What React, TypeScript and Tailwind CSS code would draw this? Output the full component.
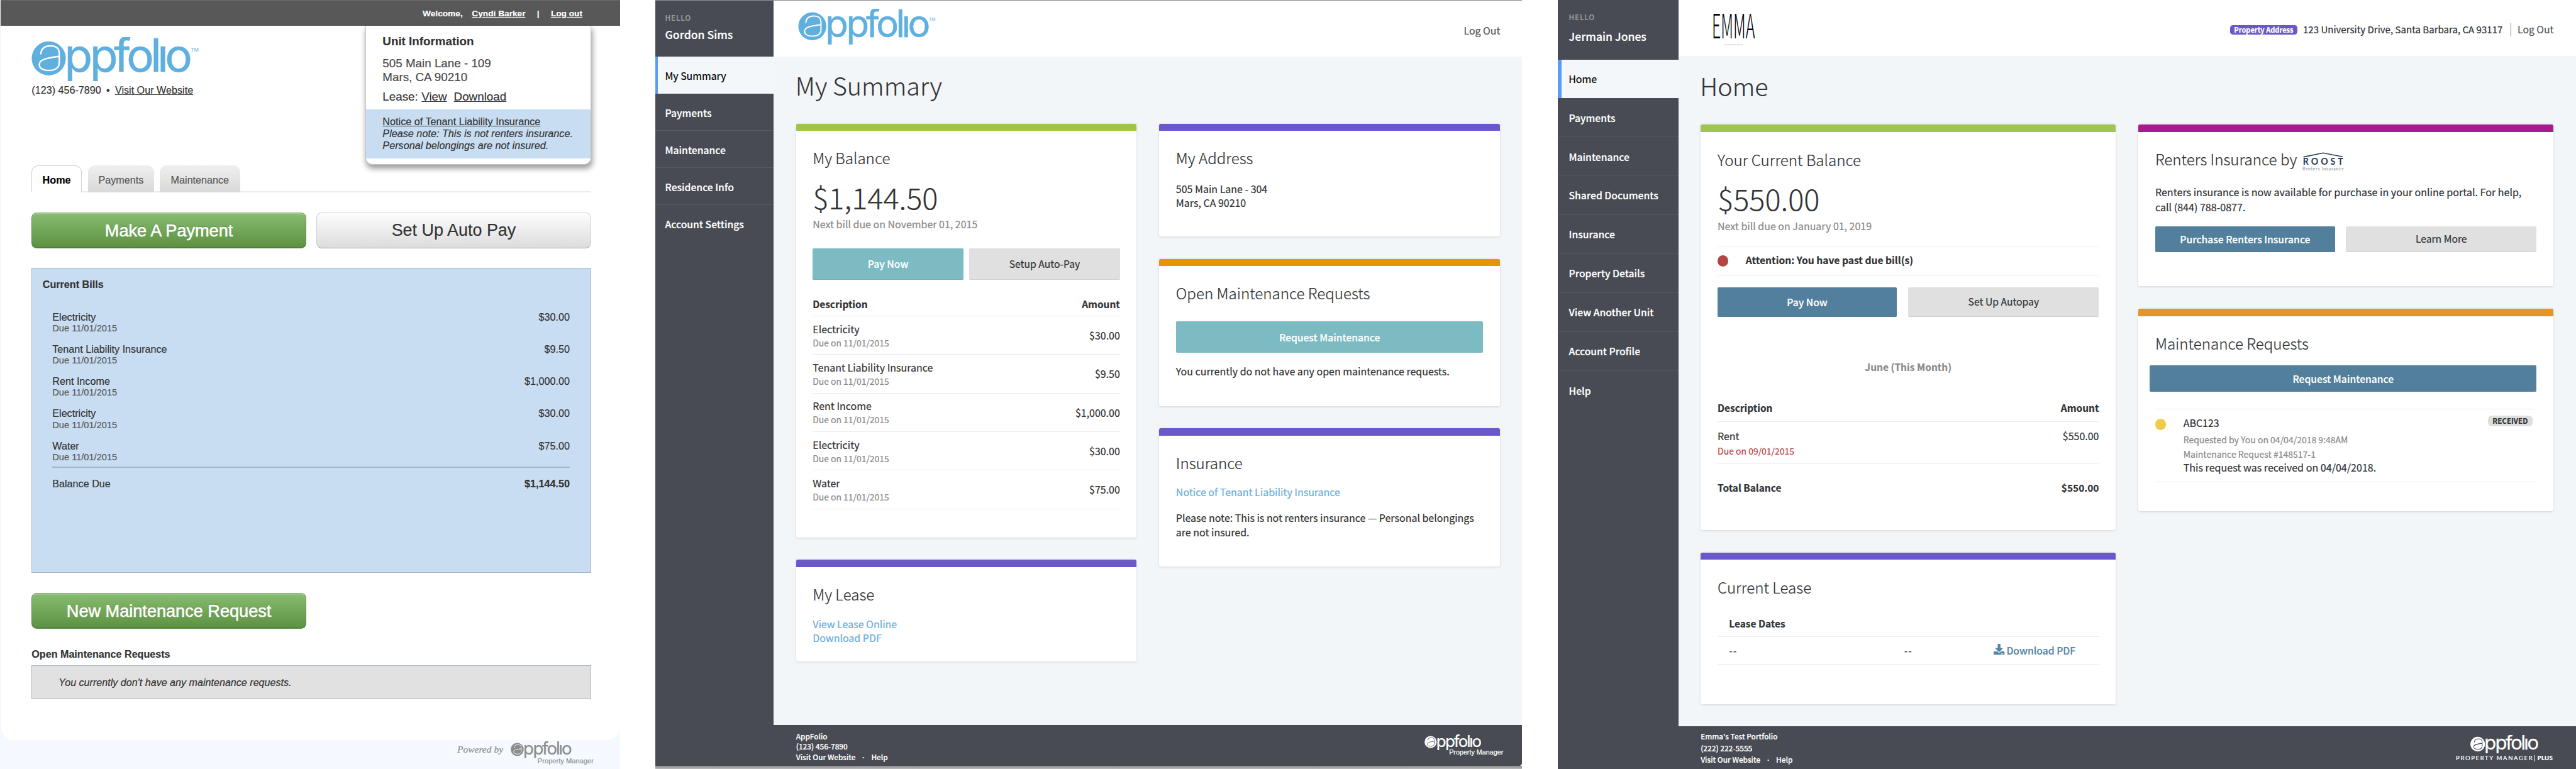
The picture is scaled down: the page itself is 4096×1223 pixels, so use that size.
import React from "react";
import { FaDownload } from "react-icons/fa";

function AppfolioLogo({ className, tm = false, hole }: { className: string; tm?: boolean; hole: string }) {
  return (
    <svg viewBox={tm ? "45 45 875 230" : "45 45 834 230"} className={className} fill="currentColor">
      <circle cx="135" cy="156" r="89" />
      <path
        d="M94 132 C96 106 112 92 142 91 C178 90 190 106 190 134 L190 176 C190 204 170 219 136 219 C102 219 84 206 86 186 C88 164 116 155 188 146"
        fill="none"
        stroke={hole}
        strokeLinecap="round"
        strokeWidth="8"
      />
      <text
        x="217 350 476 541 666 702 742"
        y="225"
        fontSize="239"
        fontFamily="Inter, sans-serif"
        stroke="currentColor"
        strokeWidth="2"
        strokeLinejoin="round"
      >
        ppfolıo
      </text>
      {tm && (
        <text x="876" y="119" fontSize="30" fontFamily="Liberation Sans, sans-serif" textLength="42" lengthAdjust="spacingAndGlyphs">
          TM
        </text>
      )}
    </svg>
  );
}

function EmmaLogo() {
  return (
    <svg viewBox="0 0 76 60" className="w-[76px] h-[60px] text-black" fill="currentColor">
      <text
        x="0"
        y="47"
        fontSize="58.5"
        fontWeight="300"
        fontFamily="Noto Sans CJK JP, sans-serif"
        textLength="75"
        lengthAdjust="spacingAndGlyphs"
      >
        EMMA
      </text>
      <path d="M22 58.5h32" stroke="#c4c4c4" strokeWidth="1.5" strokeDasharray="6 0.8" />
    </svg>
  );
}

function RoostLogo() {
  return (
    <svg viewBox="0 0 74 34" className="w-[74px] h-[34px]">
      <path d="M3 9.5 L37 2.5 L71 9" fill="none" stroke="#24415f" strokeWidth="1.8" />
      <text x="2" y="23" fontSize="15.5" fontWeight="700" fontFamily="Lato, sans-serif" fill="#1f3a5a" textLength="70">
        ROOST
      </text>
      <text x="1" y="33" fontSize="7.5" fontFamily="Lato, sans-serif" fill="#7b8794" textLength="72">
        Renters Insurance
      </text>
    </svg>
  );
}

/* ---------- Classic tenant portal ---------- */

const classicBills = [
  { name: "Electricity", amount: "$30.00" },
  { name: "Tenant Liability Insurance", amount: "$9.50" },
  { name: "Rent Income", amount: "$1,000.00" },
  { name: "Electricity", amount: "$30.00" },
  { name: "Water", amount: "$75.00" },
];

function GreenButton({ children }: { children: React.ReactNode }) {
  return (
    <button className="w-[478px] h-[62px] rounded-[9px] border border-[#5f8f4a] border-t-[#8aa680] bg-linear-to-b from-[#87bd70] to-[#5d9142] text-white text-[29.7px] leading-[61px] shadow-[inset_0_2px_0_#9ccd88,inset_0_-1px_0_#4f7d38] [text-shadow:0_-1px_1px_rgba(0,0,0,0.35)] [-webkit-text-stroke:0.7px_white]">
      {children}
    </button>
  );
}

function ClassicPortal() {
  return (
    <section className="w-[1080px] h-[1339px] shrink-0 flex flex-col bg-[#f4faff] text-[#333] font-['Liberation_Sans',sans-serif] [-webkit-text-stroke:0.2px]">
      <div className="flex-none h-[1289px] bg-white rounded-b-[24px] border-l border-[#eef5fc] flex flex-col">
        <div className="h-[45px] shrink-0 bg-[#585858] border-t-2 border-[#6c6c6c] flex justify-end pr-[66px] text-white text-[15px] leading-[46px] font-bold">
          <span className="mr-[16px]">Welcome,</span>
          <a className="underline">Cyndi Barker</a>
          <span className="mx-[20px]">|</span>
          <a className="underline">Log out</a>
        </div>
        <div className="pl-[54px] pr-[51px] flex flex-col">
          <div className="h-[243px] flex justify-between">
            <div className="pt-[20px]">
              <AppfolioLogo tm hole="#ffffff" className="w-[292px] h-[76.7px] text-[#5fafdf]" />
              <div className="mt-[4px] text-[17.7px] leading-[24px] whitespace-pre">
                <span>(123) 456-7890</span>
                <span className="mx-[9px]">•</span>
                <a className="underline">Visit Our Website</a>
              </div>
            </div>
            <div className="w-[393px] h-[242px] bg-white rounded-b-[12px] border border-t-0 border-[#c4c4c4] shadow-[2px_6px_10px_rgba(0,0,0,0.4)] text-[20.6px] leading-[24px]">
              <div className="pl-[29px] pt-[13.5px] h-[145px]">
                <div className="font-bold leading-[28px]">Unit Information</div>
                <div className="mt-[12px] text-[#484848]">505 Main Lane - 109</div>
                <div className="text-[#484848]">Mars, CA 90210</div>
                <div className="mt-[10px] flex">
                  <span className="mr-[6px]">Lease:</span>
                  <a className="underline mr-[12px]">View</a>
                  <a className="underline">Download</a>
                </div>
              </div>
              <div className="h-[86px] bg-[#c8ddf2] pl-[29px] pt-[12px] text-[17.75px] leading-[20.6px] whitespace-nowrap">
                <a className="underline block">Notice of Tenant Liability Insurance</a>
                <div className="italic">Please note: This is not renters insurance.</div>
                <div className="italic">Personal belongings are not insured.</div>
              </div>
            </div>
          </div>
          <nav className="h-[47px] flex items-end text-[17.7px] text-[#555]">
            <a className="w-[87px] h-[47px] pt-[3px] rounded-t-[12px] border border-b-0 border-[#d2d2d2] bg-white text-black font-bold flex items-center justify-center">
              Home
            </a>
            <span className="w-[11px] h-[2px] bg-[#ececec]" />
            <a className="w-[115px] h-[47px] pt-[3px] rounded-t-[12px] bg-linear-to-b from-[#efefef] to-[#d9d9d9] flex items-center justify-center">
              Payments
            </a>
            <span className="w-[10px] h-[2px] bg-[#ececec]" />
            <a className="w-[140px] h-[47px] pt-[3px] rounded-t-[12px] bg-linear-to-b from-[#efefef] to-[#d9d9d9] flex items-center justify-center">
              Maintenance
            </a>
            <span className="flex-1 h-[2px] bg-[#ececec]" />
          </nav>
          <div className="mt-[35px] flex justify-between">
            <GreenButton>Make A Payment</GreenButton>
            <button className="w-[478px] h-[62px] rounded-[9px] border border-[#cfcfcf] border-b-[#a5a5a5] bg-linear-to-b from-[#fdfdfd] to-[#dcdcdc] text-[29.5px] leading-[61px]">
              Set Up Auto Pay
            </button>
          </div>
          <div className="mt-[34px] h-[532px] bg-[#c8ddf2] border-[1.5px] border-y-2 border-[#a8b7c6] pl-[18px] pr-[36px] pt-[16.6px] text-[17.7px]">
            <div className="font-bold leading-[24px]">Current Bills</div>
            <div className="mt-[33px] pl-[17px]">
              <div className="flex flex-col gap-[16.13px]">
                {classicBills.map((b, i) => (
                  <div key={i} className="h-[40px] flex justify-between leading-[22px]">
                    <div>
                      <div>{b.name}</div>
                      <div className="text-[16px] leading-[18px] text-[#555]">Due 11/01/2015</div>
                    </div>
                    <div>{b.amount}</div>
                  </div>
                ))}
              </div>
              <div className="mt-[7.4px] h-[2px] bg-[#a5b5ca]" />
              <div className="mt-[16.4px] flex justify-between leading-[24px]">
                <span>Balance Due</span>
                <span className="font-bold">$1,144.50</span>
              </div>
            </div>
          </div>
          <div className="mt-[35px]">
            <GreenButton>New Maintenance Request</GreenButton>
          </div>
          <div className="mt-[33.2px] font-bold text-[17.65px] leading-[24px]">Open Maintenance Requests</div>
          <div className="mt-[6.8px] h-[59px] bg-[#e1e1e1] border-[1.5px] border-[#a9b4be] pl-[46px] italic text-[17.65px] leading-[57px]">
            You currently don't have any maintenance requests.
          </div>
        </div>
      </div>
      <div className="h-[50px] flex justify-end pr-[51px] text-[#8c8c8c]">
        <span className="font-['Liberation_Serif',serif] italic text-[17px] leading-[20px] mt-[6px] mr-[13px]">Powered by</span>
        <div className="w-[140px]">
          <AppfolioLogo hole="#f4faff" className="w-[106px] h-[29.3px] mt-[2px]" />
          <div className="pl-[47px] text-[12.2px] leading-[14px] mt-[-2px] whitespace-nowrap">Property Manager</div>
        </div>
      </div>
    </section>
  );
}

/* ---------- Shared pieces of the newer portals ---------- */

function Card({ bar, className, children }: { bar: string; className: string; children: React.ReactNode }) {
  return (
    <article className={`bg-white rounded-[3px] overflow-hidden shadow-[0_1px_4px_rgba(40,50,60,0.16)] ${className}`}>
      <div className={`h-[12.5px] ${bar}`} />
      {children}
    </article>
  );
}

function CardTitle({ children }: { children: React.ReactNode }) {
  return <h2 className="text-[26.4px] leading-[36px] font-light whitespace-nowrap">{children}</h2>;
}

const portalFont = "font-['Noto_Sans_CJK_JP','Noto_Sans_CJK_SC',sans-serif] [-webkit-text-stroke:0.25px]";

/* ---------- Summary portal ---------- */

const bills = [
  { name: "Electricity", amount: "$30.00" },
  { name: "Tenant Liability Insurance", amount: "$9.50" },
  { name: "Rent Income", amount: "$1,000.00" },
  { name: "Electricity", amount: "$30.00" },
  { name: "Water", amount: "$75.00" },
];

function SummaryPortal() {
  const nav = ["Payments", "Maintenance", "Residence Info", "Account Settings"];
  return (
    <section className={`w-[1509px] h-[1339px] shrink-0 flex flex-col text-[#333] ${portalFont}`}>
      <div className="h-[1334px] flex border-t border-[#8e8e8e]">
        <aside className="w-[206px] shrink-0 bg-[#484b53] text-white">
          <div className="h-[98px] pl-[17px] pt-[19.2px]">
            <div className="text-[13px] leading-[20px] font-medium tracking-[0.8px] text-[#9b9b9b]">HELLO</div>
            <div className="mt-[8px] text-[19.25px] leading-[24px] font-medium">Gordon Sims</div>
          </div>
          <nav className="text-[17.2px] leading-[24px] font-medium">
            <a className="h-[64.3px] pt-[2px] pl-[12.5px] border-l-[4.5px] border-[#5b9bf5] bg-[#f3f7fa] text-black font-normal text-[17.4px] flex items-center">
              My Summary
            </a>
            {nav.map((n) => (
              <a key={n} className="h-[64.6px] pt-[3px] pl-[17px] border-b border-[#575a61] last:border-b-0 flex items-center">
                {n}
              </a>
            ))}
          </nav>
        </aside>
        <div className="flex-1 flex flex-col bg-[#f2f6f9]">
          <header className="h-[97px] shrink-0 bg-white flex justify-between pl-[43px] pr-[38px]">
            <AppfolioLogo tm hole="#ffffff" className="mt-[14px] w-[240px] h-[63px] text-[#5fafdf]" />
            <a className="mt-[40.5px] text-[17.4px] leading-[24px] text-[#555]">Log Out</a>
          </header>
          <main className="pl-[39px] flex-1">
            <h1 className="mt-[24px] text-[43.2px] leading-[52px] font-light ml-[-1px]">My Summary</h1>
            <div className="mt-[41.4px] flex gap-[39px] text-[17.5px] leading-[24px]">
              <div className="w-[593px] flex flex-col gap-[38.5px]">
                <Card bar="bg-[#9fc44c]" className="h-[721px]">
                  <div className="px-[29px] pt-[29.4px]">
                    <CardTitle>My Balance</CardTitle>
                    <div className="mt-[19.3px] text-[51.4px] leading-[60px] font-light">$1,144.50</div>
                    <div className="mt-[6.4px] text-[#8a8a8a]">Next bill due on November 01, 2015</div>
                    <div className="mt-[29px] flex gap-[10px] text-[17.2px]">
                      <button className="flex-1 h-[55px] pt-px rounded-[2px] bg-[#7cbbc2] border-b-2 border-[#73b0b8] text-white font-medium">
                        Pay Now
                      </button>
                      <button className="flex-1 h-[55px] pt-px rounded-[2px] bg-[#e0e0e0] border-b-2 border-[#d2d2d2]">Setup Auto-Pay</button>
                    </div>
                    <div className="mt-[30.4px] pb-[8.5px] border-b border-[#ececec] flex justify-between font-bold text-[16.9px]">
                      <span>Description</span>
                      <span>Amount</span>
                    </div>
                    {bills.map((b, i) => (
                      <div key={i} className="h-[67.1px] pt-[1.4px] border-b border-[#ececec] flex items-center justify-between">
                        <div>
                          <div>{b.name}</div>
                          <div className="text-[15.25px] leading-[22px] text-[#8a8a8a]">Due on 11/01/2015</div>
                        </div>
                        <div>{b.amount}</div>
                      </div>
                    ))}
                  </div>
                </Card>
                <Card bar="bg-[#6a58cb]" className="h-[177px]">
                  <div className="px-[29px] pt-[29.4px]">
                    <CardTitle>My Lease</CardTitle>
                    <div className="mt-[22px] text-[#6aaede] flex flex-col">
                      <a>View Lease Online</a>
                      <a>Download PDF</a>
                    </div>
                  </div>
                </Card>
              </div>
              <div className="w-[594px] flex flex-col gap-[39px]">
                <Card bar="bg-[#6a58cb]" className="h-[196.5px]">
                  <div className="px-[29.5px] pt-[29.8px]">
                    <CardTitle>My Address</CardTitle>
                    <div className="mt-[22.2px] leading-[24.3px]">
                      505 Main Lane - 304
                      <br />
                      Mars, CA 90210
                    </div>
                  </div>
                </Card>
                <Card bar="bg-[#e69500]" className="h-[256px]">
                  <div className="px-[29.5px] pt-[29.8px]">
                    <CardTitle>Open Maintenance Requests</CardTitle>
                    <button className="mt-[30.6px] pt-px w-full h-[55px] rounded-[2px] bg-[#7cbbc2] text-white font-medium text-[17.15px]">
                      Request Maintenance
                    </button>
                    <div className="mt-[20.4px]">You currently do not have any open maintenance requests.</div>
                  </div>
                </Card>
                <Card bar="bg-[#6a58cb]" className="h-[241px]">
                  <div className="px-[29.5px] pt-[29.8px]">
                    <CardTitle>Insurance</CardTitle>
                    <a className="block mt-[21.6px] text-[#6aaede]">Notice of Tenant Liability Insurance</a>
                    <div className="mt-[19.6px] leading-[24.9px] whitespace-nowrap">
                      Please note: This is not renters insurance — Personal belongings
                      <br />
                      are not insured.
                    </div>
                  </div>
                </Card>
              </div>
            </div>
          </main>
          <footer className="h-[72px] shrink-0 bg-[#484b53] text-white rounded-br-[5px] pl-[39px] pr-[38px] pt-[11px] flex justify-between">
            <div className="text-[12.85px] leading-[18.3px] font-medium">
              <div>AppFolio</div>
              <div>(123) 456-7890</div>
              <div className="flex">
                <a>Visit Our Website</a>
                <span className="mx-[10px]">·</span>
                <a>Help</a>
              </div>
            </div>
            <div className="w-[132px] mt-[5.5px]">
              <AppfolioLogo hole="#484b53" className="w-[99px] h-[27.3px]" />
              <div className="pl-[43px] font-['Liberation_Sans',sans-serif] text-[11.8px] leading-[13px] mt-[-2px] whitespace-nowrap">
                Property Manager
              </div>
            </div>
          </footer>
        </div>
      </div>
      <div className="h-[5px] bg-linear-to-b from-[#8b8b8b] to-[#b9b9b9]" />
    </section>
  );
}

/* ---------- Home portal ---------- */

function HomePortal() {
  const nav = [
    "Payments",
    "Maintenance",
    "Shared Documents",
    "Insurance",
    "Property Details",
    "View Another Unit",
    "Account Profile",
    "Help",
  ];
  return (
    <section className={`w-[1773px] h-[1339px] shrink-0 flex text-[#303336] ${portalFont}`}>
      <aside className="w-[210px] shrink-0 bg-[#484b53] text-white">
        <div className="h-[104px] pl-[19.5px] pt-[20px]">
          <div className="text-[13px] leading-[20px] font-medium tracking-[0.8px] text-[#9b9b9b]">HELLO</div>
          <div className="mt-[11.7px] text-[19.25px] leading-[24px] font-medium">Jermain Jones</div>
        </div>
        <nav className="text-[17.2px] leading-[24px] font-medium">
          <a className="h-[67px] pt-px pl-[12.5px] border-l-[7px] border-[#5b9bf8] bg-[#f3f7fa] text-black font-normal text-[17.5px] flex items-center">
            Home
          </a>
          {nav.map((n) => (
            <a key={n} className="h-[67.85px] pt-[2px] pl-[19.5px] border-b border-[#54575e] last:border-b-0 flex items-center">
              {n}
            </a>
          ))}
        </nav>
      </aside>
      <div className="flex-1 flex flex-col bg-[#f2f6f9]">
        <header className="h-[98px] shrink-0 bg-white flex justify-between pl-[59px] pr-[39px]">
          <div className="pt-[20px]">
            <EmmaLogo />
          </div>
          <div className="mt-[39px] h-[24px] flex items-center leading-[24px]">
            <span className="w-[117px] h-[17px] mt-[2px] rounded-[5px] bg-[#6a58cb] text-white text-[12.1px] leading-[17px] font-bold text-center whitespace-nowrap">
              Property Address
            </span>
            <span className="ml-[10px] text-[16.5px] whitespace-nowrap">123 University Drive, Santa Barbara, CA 93117</span>
            <span className="ml-[14px] w-px h-[24px] bg-[#777]" />
            <a className="ml-[11px] text-[17.2px] text-[#555] whitespace-nowrap">Log Out</a>
          </div>
        </header>
        <main className="pl-[39px] flex-1">
          <h1 className="mt-[25px] text-[43.2px] leading-[52px] font-light ml-[-1px]">Home</h1>
          <div className="mt-[42px] flex gap-[39px] text-[17.5px] leading-[24px]">
            <div className="w-[723px] flex flex-col gap-[39px]">
              <Card bar="bg-[#9fc450]" className="h-[706px]">
                <div className="px-[29.5px] pt-[30.8px]">
                  <CardTitle>Your Current Balance</CardTitle>
                  <div className="mt-[19.6px] text-[51.4px] leading-[60px] font-light">$550.00</div>
                  <div className="mt-[6.3px] text-[#8a8a8a]">Next bill due on January 01, 2019</div>
                  <div className="mt-[21.8px] h-[53px] border-y border-[#ececec] flex items-center">
                    <span className="w-[19px] h-[19px] rounded-full bg-[#b54545]" />
                    <span className="ml-[30px] mb-[3px] font-bold text-[17.1px]">Attention: You have past due bill(s)</span>
                  </div>
                  <div className="mt-[19.5px] flex gap-[20px] text-[17.2px]">
                    <button className="w-[312px] h-[51px] pt-px rounded-[2px] bg-[#527f9c] text-white font-medium">Pay Now</button>
                    <button className="flex-1 h-[51px] pt-px rounded-[2px] bg-[#e0e0e0] border-b border-[#cfcfcf]">Set Up Autopay</button>
                  </div>
                  <div className="mt-[76.2px] text-center font-bold text-[17px] text-[#8a8a8a]">June (This Month)</div>
                  <div className="mt-[47.2px] pb-[11.1px] border-b border-[#ececec] flex justify-between font-bold text-[16.9px]">
                    <span>Description</span>
                    <span>Amount</span>
                  </div>
                  <div className="pt-[12.6px] pb-[10.4px] border-b border-[#ececec] flex justify-between">
                    <div>
                      <div>Rent</div>
                      <div className="mt-[2.7px] text-[15.3px] leading-[22px] text-[#b54545]">Due on 09/01/2015</div>
                    </div>
                    <div>$550.00</div>
                  </div>
                  <div className="mt-[30.2px] flex justify-between font-bold text-[16.9px]">
                    <span>Total Balance</span>
                    <span>$550.00</span>
                  </div>
                </div>
              </Card>
              <Card bar="bg-[#6a58cb]" className="h-[264px]">
                <div className="px-[29.5px] pt-[30.8px]">
                  <CardTitle>Current Lease</CardTitle>
                  <div className="mt-[33px] pl-[20px] pb-[10.2px] border-b border-[#ececec] font-bold text-[16.9px]">Lease Dates</div>
                  <div className="h-[48px] pl-[20px] pt-[12.2px] border-b border-[#ececec] flex">
                    <span className="w-[305px] tracking-[1px]">--</span>
                    <span className="w-[156px] tracking-[1px]">--</span>
                    <a className="flex text-[#5585a3] font-medium text-[17.2px]">
                      <FaDownload className="w-[19px] h-[19px] mr-[3px]" />
                      Download PDF
                    </a>
                  </div>
                </div>
              </Card>
            </div>
            <div className="w-[723px] flex flex-col gap-[40px]">
              <Card bar="bg-[#a81b8d]" className="h-[281px]">
                <div className="px-[29.5px] pt-[30.6px]">
                  <div className="flex h-[36px]">
                    <CardTitle>Renters Insurance by</CardTitle>
                    <div className="ml-[8px] mt-[4px]">
                      <RoostLogo />
                    </div>
                  </div>
                  <div className="mt-[24.6px] text-[17.6px] leading-[27px] whitespace-nowrap">
                    Renters insurance is now available for purchase in your online portal. For help,
                    <br />
                    call (844) 788-0877.
                  </div>
                  <div className="mt-[19.2px] flex gap-[19px] text-[17.2px] font-medium">
                    <button className="w-[313px] h-[45px] pt-px rounded-[2px] bg-[#527f9c] text-white">Purchase Renters Insurance</button>
                    <button className="flex-1 h-[45px] pt-px rounded-[2px] bg-[#e0e0e0] border-b border-[#cfcfcf] font-normal">
                      Learn More
                    </button>
                  </div>
                </div>
              </Card>
              <Card bar="bg-[#e59427]" className="h-[352px]">
                <div className="px-[29.5px] pt-[30.2px]">
                  <CardTitle>Maintenance Requests</CardTitle>
                  <div className="ml-[-9.5px] mt-[19.8px]">
                    <button className="w-full h-[46px] pt-px rounded-[2px] bg-[#527f9c] text-white text-[17.2px] font-medium">
                      Request Maintenance
                    </button>
                  </div>
                  <div className="mt-[29.5px] h-[127.5px] border-y border-[#ececec] pt-[12px] pr-[7px] flex">
                    <span className="w-[19px] h-[19px] mt-[4.5px] rounded-full bg-[#f0cb47]" />
                    <div className="ml-[30px] flex-1">
                      <div>ABC123</div>
                      <div className="mt-[4px] text-[15.35px] leading-[25px] text-[#8a8a8a]">
                        Requested by You on 04/04/2018 9:48AM
                        <br />
                        Maintenance Request #148517-1
                      </div>
                      <div className="text-[17.6px]">This request was received on 04/04/2018.</div>
                    </div>
                    <span className="w-[78px] h-[18px] mt-[-1px] rounded-[7px] bg-[#dedede] text-center text-[12.7px] leading-[18px] font-bold">
                      RECEIVED
                    </span>
                  </div>
                </div>
              </Card>
            </div>
          </div>
        </main>
        <footer className="h-[74px] shrink-0 bg-[#484b53] text-white pl-[39px] pr-[39px] pt-[7.4px] flex justify-between">
          <div className="text-[12.87px] leading-[20.4px] font-medium">
            <div>Emma's Test Portfolio</div>
            <div>(222) 222-5555</div>
            <div className="flex">
              <a>Visit Our Website</a>
              <span className="mx-[10px]">·</span>
              <a>Help</a>
            </div>
          </div>
          <div className="w-[170px] mt-[8px] flex flex-col">
            <AppfolioLogo hole="#484b53" className="ml-[25px] w-[118.5px] h-[32.7px]" />
            <div className="flex items-center text-[10.5px] leading-[12px] mt-[2px] font-['Lato',sans-serif] whitespace-nowrap">
              <span className="tracking-[1.75px]">PROPERTY MANAGER</span>
              <span className="ml-[2px] w-px h-[11px] bg-white" />
              <span className="ml-[4px] font-black tracking-[0.3px]">PLUS</span>
            </div>
          </div>
        </footer>
      </div>
    </section>
  );
}

export default function App() {
  return (
    <div className="w-[4096px] h-[1223px] overflow-hidden bg-white">
      <div className="[zoom:0.91326] w-[4485px] h-[1340px] flex">
        <ClassicPortal />
        <div className="w-[61px] shrink-0" />
        <SummaryPortal />
        <div className="w-[62px] shrink-0" />
        <HomePortal />
      </div>
    </div>
  );
}
